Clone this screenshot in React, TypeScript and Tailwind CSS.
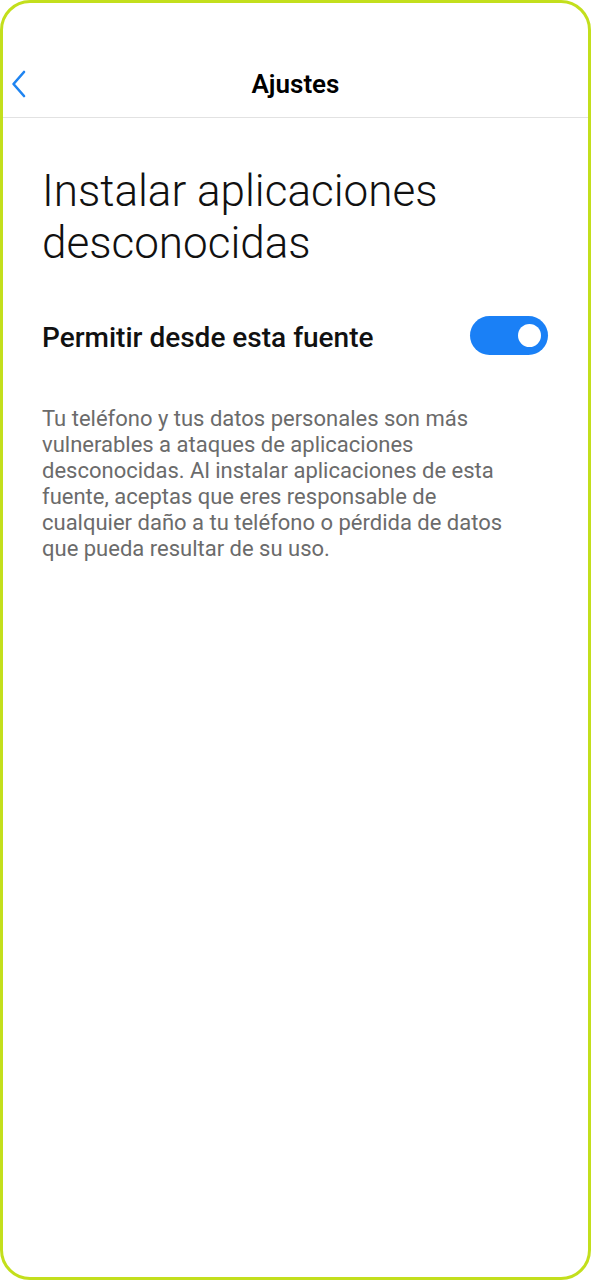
import React, { useState } from "react";

export default function App() {
  const [allowed, setAllowed] = useState(true);

  return (
    <div className="w-[591px] h-[1280px] bg-white" style={{ fontFamily: "Roboto, 'Noto Sans', sans-serif" }}>
      <div className="w-full h-full border-[3px] border-[#c3df1c] rounded-[30px] bg-white overflow-hidden">
        {/* top bar */}
        <div className="relative h-[115px] pt-[48px] border-b border-[#e2e2e2]">
          <button type="button" className="absolute left-[3px] top-[62px] p-1 text-[#1f84f1]">
            <svg width="18" height="30" viewBox="0 0 18 30" fill="none">
              <path d="M14 3 L3.5 15 L14 27" stroke="currentColor" strokeWidth="2.6" strokeLinecap="round" strokeLinejoin="round" />
            </svg>
          </button>
          <div className="h-[66px] flex items-center justify-center">
            <h1 className="text-[26px] font-semibold text-black">Ajustes</h1>
          </div>
        </div>

        <div className="pl-[39px] pr-[40px]">
          <h2 className="mt-[47px] text-[44px] leading-[52px] font-light text-[#111]">
            Instalar aplicaciones
            <br />
            desconocidas
          </h2>

          <div className="mt-[47px] flex items-center justify-between h-[39px]">
            <span className="text-[28px] font-medium text-[#111] pt-[4px]">Permitir desde esta fuente</span>
            <button
              type="button"
              onClick={() => setAllowed(!allowed)}
              className={`w-[78px] h-[39px] rounded-full flex items-center px-[5px] ${
                allowed ? "bg-[#1a80f6] justify-end" : "bg-[#d4d4d4] justify-start"
              }`}
            >
              <span className="w-[23px] h-[23px] rounded-full bg-white mr-[2px]" />
            </button>
          </div>

          <p className="mt-[51px] text-[22px] leading-[26px] text-[#6b6b6b]">
            Tu teléfono y tus datos personales son más
            <br />
            vulnerables a ataques de aplicaciones
            <br />
            desconocidas. Al instalar aplicaciones de esta
            <br />
            fuente, aceptas que eres responsable de
            <br />
            cualquier daño a tu teléfono o pérdida de datos
            <br />
            que pueda resultar de su uso.
          </p>
        </div>
      </div>
    </div>
  );
}
